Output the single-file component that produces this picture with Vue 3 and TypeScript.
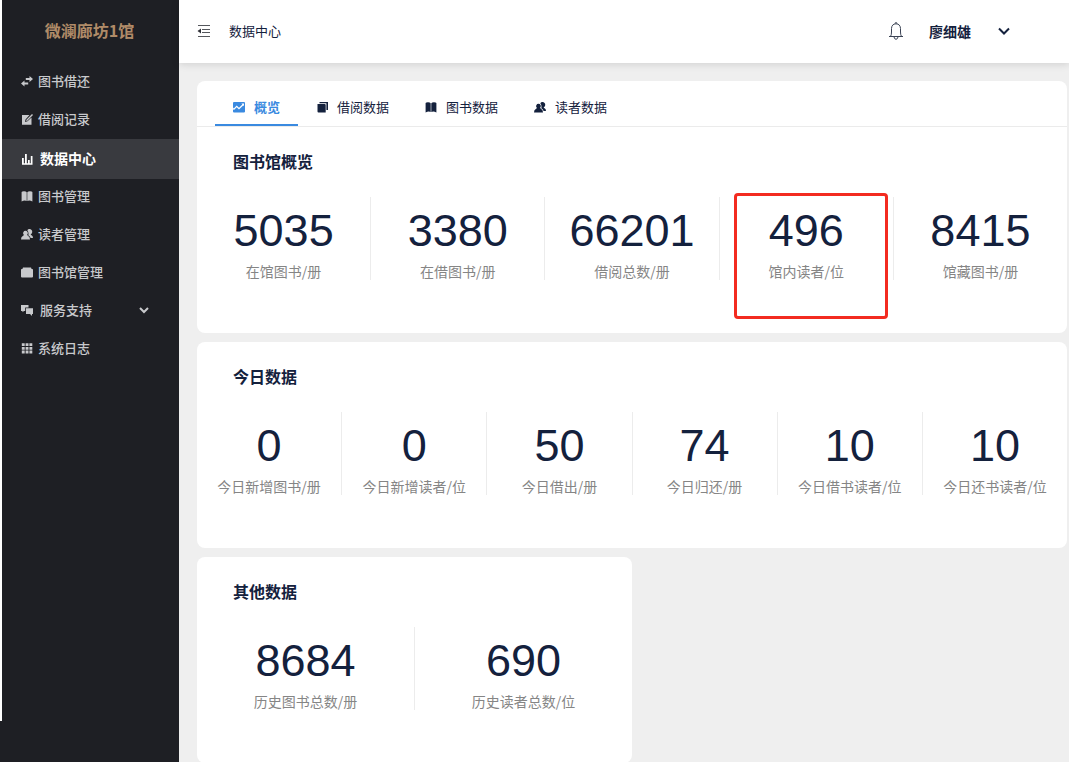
<script setup lang="ts">
import { ref } from 'vue'

interface Entry {
  label: string
  icon: string
  expandable?: boolean
}

interface Stat {
  value: number
  label: string
  marked?: boolean
}

interface Section {
  title: string
  stats: Stat[]
}

const icons: Record<string, string> = {
  swap: 'M4.800 3H8.500V1L12 4L8.500 7V5H4.800ZM7.200 9.500H3.500V11.500L0 8.500L3.500 5.500V7.500H7.200Z',
  edit: 'M1 2H8.500L4.500 6.500L4 9L6.500 8.300L10.500 4.500V11.800H1ZM11 1L12 2L6.300 7.700L5.200 7.900L5.400 6.800Z',
  bars: 'M1 5H2.800V10.300H4V1H5.800V10.300H7V7H8.700V10.300H9.800V3H11.500V11.800H1Z',
  book: 'M.6 2Q1 1.300 3 1.300Q5 1.300 5.700 2.200V11Q3.500 10 .6 11.500ZM6.300 2.200Q7 1.300 9 1.300Q11 1.300 11.400 2V11.500Q8.500 10 6.300 11Z',
  users: 'M4.400 2.800A2.300 2.300 0 0 1 6.200 6.600Q6 7.500 7.200 7.900Q9 8.600 9 11.500H0Q0 8.600 1.800 7.900Q3 7.500 2.700 6.600A2.300 2.300 0 0 1 4.400 2.800ZM6.300 2.300A2.700 2.700 0 1 1 9.800 6.200Q9.600 6.900 10.600 7.300Q12 7.900 12 10H9.600Q9.200 8.100 7.300 7.200Q8 4.500 6.300 2.300Z',
  folder: 'M2 1.500H10L10.6 3H11.2Q12 3 12 3.8V10.500Q12 11.500 11 11.500H1Q0 11.500 0 10.500V3.8Q0 3 .8 3H1.4Z',
  chat: 'M0 1H7.500V3.500H4.200V7H3L1.500 8.300V7H0ZM5 4.200H12V10H11V12L9 10H5Z',
  grid: 'M.8 1.200H3.700V4H.8ZM4.600 1.200H7.500V4H4.600ZM8.400 1.200H11.300V4H8.400ZM.8 4.900H3.700V7.700H.8ZM4.600 4.900H7.500V7.700H4.600ZM8.400 4.900H11.300V7.700H8.400ZM.8 8.600H3.700V11.400H.8ZM4.600 8.600H7.500V11.400H4.600ZM8.400 8.600H11.300V11.400H8.400Z',
  chart: 'M1 1H11Q12 1 12 2V10.500Q12 11.500 11 11.500H1Q0 11.500 0 10.500V8.200L1 9L3.700 6.300L6 8.500L10.200 4.500L11 5.100V2.500H8.400L9.300 3.400L6 6.700L3.700 4.500L.8 7.400L0 6.600V2Q0 1 1 1Z',
  copy: 'M3.500 1H12V9H10.400V2.300H3.500ZM1.500 3H8.700Q9.700 3 9.700 4V11.500H2.500Q1.500 11.500 1.500 10.500Z',
}

const menu: Entry[] = [
  { label: '图书借还', icon: 'swap' },
  { label: '借阅记录', icon: 'edit' },
  { label: '数据中心', icon: 'bars' },
  { label: '图书管理', icon: 'book' },
  { label: '读者管理', icon: 'users' },
  { label: '图书馆管理', icon: 'folder' },
  { label: '服务支持', icon: 'chat', expandable: true },
  { label: '系统日志', icon: 'grid' },
]

const tabs: Entry[] = [
  { label: '概览', icon: 'chart' },
  { label: '借阅数据', icon: 'copy' },
  { label: '图书数据', icon: 'book' },
  { label: '读者数据', icon: 'users' },
]

const sections: Section[] = [
  {
    title: '图书馆概览',
    stats: [
      { value: 5035, label: '在馆图书/册' },
      { value: 3380, label: '在借图书/册' },
      { value: 66201, label: '借阅总数/册' },
      { value: 496, label: '馆内读者/位', marked: true },
      { value: 8415, label: '馆藏图书/册' },
    ],
  },
  {
    title: '今日数据',
    stats: [
      { value: 0, label: '今日新增图书/册' },
      { value: 0, label: '今日新增读者/位' },
      { value: 50, label: '今日借出/册' },
      { value: 74, label: '今日归还/册' },
      { value: 10, label: '今日借书读者/位' },
      { value: 10, label: '今日还书读者/位' },
    ],
  },
  {
    title: '其他数据',
    stats: [
      { value: 8684, label: '历史图书总数/册' },
      { value: 690, label: '历史读者总数/位' },
    ],
  },
]

const activeMenu = ref('数据中心')
const activeTab = ref('概览')
</script>

<template>
  <div class="shell">
    <aside class="sidebar">
      <div class="brand">微澜廊坊1馆</div>
      <nav class="menu">
        <a
          v-for="item in menu"
          :key="item.label"
          href="#"
          class="menu-item"
          :class="{ active: item.label === activeMenu, expandable: item.expandable }"
          @click.prevent="activeMenu = item.label"
        >
          <svg class="icon" viewBox="0 0 12 12" aria-hidden="true"><path :d="icons[item.icon]" /></svg>
          <span>{{ item.label }}</span>
          <svg v-if="item.expandable" class="caret" viewBox="0 0 10 8" aria-hidden="true">
            <path d="M1 2L5 6L9 2" />
          </svg>
        </a>
      </nav>
    </aside>

    <div class="page">
      <header class="topbar">
        <button type="button" class="plain fold" aria-label="收起菜单">
          <svg viewBox="0 0 14 14" aria-hidden="true">
            <path class="line" d="M1 1.500H13M5 5.500H13M5 8.500H13M1 12.500H13" />
            <path d="M.5 7L4 4.500V9.500Z" />
          </svg>
        </button>
        <span class="crumb">数据中心</span>
        <button type="button" class="plain bell" aria-label="通知">
          <svg viewBox="0 0 16 18" aria-hidden="true">
            <path d="M1 14.500H15M2.500 14.500Q3.500 13 3.500 10V6.500Q3.700 2 8 1.800Q12.300 2 12.500 6.500V10Q12.500 13 13.500 14.500M6 15Q6.500 17.300 8 17.300Q9.500 17.300 10 15M7 1.500Q7 .6 8 .6Q9 .6 9 1.500" />
          </svg>
        </button>
        <button type="button" class="plain user">
          <span>廖细雄</span>
          <svg viewBox="0 0 12 8" aria-hidden="true"><path d="M1 1.500L6 6.500L11 1.500" /></svg>
        </button>
      </header>

      <main class="content">
        <section
          v-for="(section, index) in sections"
          :key="section.title"
          class="card"
          :class="{ half: section.stats.length < 3 }"
        >
          <div v-if="index === 0" class="tabs" role="tablist">
            <button
              v-for="tab in tabs"
              :key="tab.label"
              type="button"
              role="tab"
              class="tab"
              :class="{ active: tab.label === activeTab }"
              :aria-selected="tab.label === activeTab"
              @click="activeTab = tab.label"
            >
              <svg class="icon" viewBox="0 0 12 12" aria-hidden="true"><path :d="icons[tab.icon]" /></svg>
              <span>{{ tab.label }}</span>
            </button>
          </div>
          <h2 class="title">{{ section.title }}</h2>
          <div class="stats">
            <div v-for="stat in section.stats" :key="stat.label" class="stat" :class="{ marked: stat.marked }">
              <strong class="value">{{ stat.value }}</strong>
              <span class="label">{{ stat.label }}</span>
            </div>
          </div>
        </section>
      </main>
    </div>
  </div>
</template>

<style>
html {
  scrollbar-width: none;
}

body {
  margin: 0;
  background: #efefef;
}
</style>

<style scoped>
.shell {
  display: flex;
  min-height: 100vh;
  font-family: "Liberation Sans", "Noto Sans CJK SC", sans-serif;
  font-size: 13px;
  color: #14213d;
}

.sidebar {
  position: relative;
  flex: none;
  width: 179px;
  background: #1e1f24;
}

.sidebar::before {
  content: "";
  position: absolute;
  inset: 0 auto 42px 0;
  width: 2px;
  background: #fff;
}

.brand {
  height: 62px;
  line-height: 60px;
  font-family: "Noto Sans CJK SC", sans-serif;
  font-size: 16px;
  font-weight: 700;
  text-align: center;
  color: #b08b68;
}

.menu {
  display: flex;
  flex-direction: column;
  margin-left: 2px;
}

.menu-item {
  display: flex;
  align-items: center;
  gap: 5px;
  height: 38px;
  box-sizing: border-box;
  padding: 0 30px 2px 19px;
  font-weight: 500;
  color: #c8c9cc;
  text-decoration: none;
}

.menu-item.active {
  gap: 7px;
  height: 40px;
  margin: 1px 0 -2px;
  background: #393a3f;
  color: #fff;
  font-size: 14px;
  font-weight: 700;
}

.menu-item.expandable {
  gap: 7px;
}

.icon {
  flex: none;
  width: 12px;
  height: 12px;
  fill: currentColor;
}

.caret {
  width: 10px;
  height: 8px;
  margin-left: auto;
  fill: none;
  stroke: currentColor;
  stroke-width: 2;
}

.menu-item .icon,
.caret {
  margin-top: 2px;
}

.page {
  flex: 1;
  min-width: 0;
}

.topbar {
  position: relative;
  display: flex;
  align-items: center;
  height: 63px;
  box-sizing: border-box;
  padding: 0 59px 2px 18px;
  background: #fff;
  box-shadow: 0 1px 8px rgba(0, 0, 0, 0.14);
}

.plain {
  display: flex;
  align-items: center;
  padding: 0;
  border: 0;
  background: none;
  color: inherit;
  font: inherit;
  cursor: pointer;
}

.fold svg {
  width: 14px;
  height: 14px;
  fill: #303238;
}

.fold .line {
  stroke: #55575c;
}

.crumb {
  margin-left: 18px;
}

.bell {
  margin-left: auto;
}

.bell svg {
  width: 16px;
  height: 18px;
  fill: none;
  stroke: #3b4354;
}

.user {
  gap: 27px;
  margin-left: 25px;
  font-size: 14px;
  font-weight: 700;
}

.user svg {
  width: 12px;
  height: 8px;
  fill: none;
  stroke: currentColor;
  stroke-width: 2;
}

.content {
  display: flex;
  flex-direction: column;
  gap: 9px;
  padding: 18px 2px 0 18px;
}

.card {
  border-radius: 8px;
  background: #fff;
}

.card.half {
  width: 50%;
}

.tabs {
  display: flex;
  height: 45px;
  padding-left: 18px;
  border-bottom: 1px solid #ebebeb;
}

.tab {
  display: flex;
  align-items: center;
  gap: 9px;
  padding: 8px 18px 0;
  border: 0;
  border-bottom: 2px solid transparent;
  background: none;
  color: inherit;
  font: inherit;
  cursor: pointer;
}

.tab.active {
  border-bottom-color: #3a8ae0;
  color: #3a8ae0;
  font-weight: 700;
}

.title {
  margin: 0;
  padding: 24px 36px 22px;
  font-size: 16px;
  line-height: 24px;
  font-weight: 700;
}

.stats {
  display: flex;
  margin-right: -1px;
  padding-bottom: 53px;
}

.stat {
  position: relative;
  flex: 1;
  display: flex;
  flex-direction: column;
  align-items: center;
  box-sizing: border-box;
  height: 83px;
  border-right: 1px solid #ececec;
}

.stat:last-child {
  border-right-color: transparent;
}

.value {
  font-size: 45px;
  line-height: 68px;
  font-weight: 400;
}

.label {
  font-family: "Noto Sans CJK SC", sans-serif;
  font-size: 14px;
  line-height: 12px;
  color: #858585;
}

.stat.marked::after {
  content: "";
  position: absolute;
  inset: -4px 5px -39px 14px;
  border: 3px solid #f32b20;
  border-radius: 4px;
  pointer-events: none;
}
</style>
